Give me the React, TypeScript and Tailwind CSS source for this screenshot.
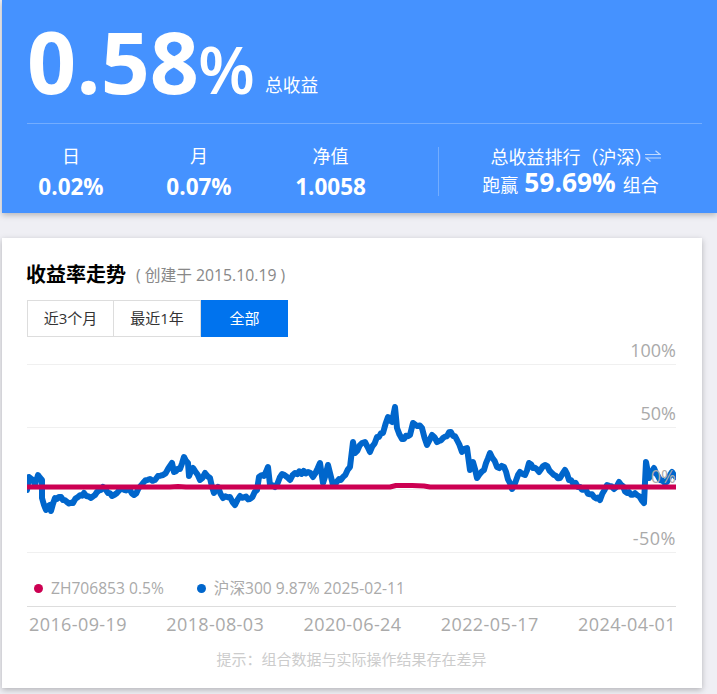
import React from 'react';

const SANS = "font-['Open_Sans','Noto_Sans_CJK_SC',sans-serif]";

const bluePoints = [
  [27, 490], [29, 477], [33, 480], [35, 485], [38, 475], [42, 480], [42, 498], [46, 510], [50, 505], [51, 511], [55, 498], [61, 497], [67, 502], [73, 503], [78, 497], [84, 493], [91, 498], [97, 492], [103, 487], [108, 493], [112, 496], [117, 493], [122, 489], [130, 490], [134, 495], [143, 483], [150, 479], [155, 480], [158, 476], [163, 475], [168, 469], [172, 463], [174, 472], [180, 469], [184, 457], [188, 463], [189, 476], [193, 468], [200, 480], [205, 473], [210, 478], [214, 493], [218, 487], [223, 498], [230, 497], [235, 505], [240, 496], [250, 499], [257, 490], [259, 477], [264, 476], [268, 467], [270, 485], [275, 487], [282, 474], [287, 477], [290, 480], [295, 473], [308, 472], [313, 477], [320, 463], [323, 483], [328, 465], [333, 485], [343, 477], [350, 467], [353, 442], [355, 453], [362, 443], [365, 442], [370, 452], [377, 437], [383, 433], [388, 417], [392, 422], [395, 407], [397, 428], [402, 439], [410, 435], [413, 423], [422, 428], [427, 445], [432, 435], [437, 442], [443, 438], [451, 432], [457, 440], [462, 452], [467, 448], [470, 470], [473, 462], [477, 478], [484, 470], [490, 453], [497, 467], [504, 467], [512, 489], [520, 472], [525, 475], [529, 463], [539, 472], [545, 465], [554, 475], [560, 478], [565, 470], [569, 480], [580, 487], [594, 497], [600, 500], [607, 485], [614, 489], [619, 482], [627, 493], [637, 495], [644, 503], [646, 462], [649, 478], [654, 468], [660, 480], [667, 482], [672, 472], [676, 477],
];

// fill in daily wobble between the hand read points
function wobble(points: number[][]) {
  const out: string[] = [];
  points.forEach(([x, y], i) => {
    out.push(`${x},${y}`);
    const next = points[i + 1];
    if (!next) return;
    const steps = Math.floor((next[0] - x) / 2);
    for (let s = 1; s < steps; s++) {
      const t = s / steps;
      const px = x + (next[0] - x) * t;
      const py = y + (next[1] - y) * t + Math.sin(px * 7.3) * 1.4;
      out.push(`${px.toFixed(1)},${py.toFixed(1)}`);
    }
  });
  return out.join(' ');
}

const blueLine = wobble(bluePoints);

const redLine = '27,487 170,487 178,486.5 186,487 390,487 396,485.5 412,485.5 424,486 430,487 676,487';

const stats = [
  { label: '日', value: '0.02%', width: 'w-[128px]' },
  { label: '月', value: '0.07%', width: 'w-[128px]' },
  { label: '净值', value: '1.0058', width: 'w-[135px]' },
];

const yLabels = [
  { text: '100%', top: 'top-[-2px]' },
  { text: '50%', top: 'top-[61px]' },
  { text: '-50%', top: 'top-[186px] tracking-[0.5px]' },
];

const dates = ['2016-09-19', '2018-08-03', '2020-06-24', '2022-05-17', '2024-04-01'];

function SwapIcon() {
  return (
    <svg width="16" height="12" viewBox="0 0 16 12" fill="none" stroke="white" strokeOpacity="0.65" strokeWidth="1.2" className="absolute left-[156px] top-[3px]">
      <path d="M0 4.5H15L10.5 0.8" />
      <path d="M16 8H1L5.5 11.5" />
    </svg>
  );
}

export default function App() {
  return (
    <div className={`h-[694px] w-[717px] overflow-hidden bg-[#efeff4] pl-[2px] ${SANS}`}>
      <header className="h-[213px] bg-[#4592ff] pl-[25px] text-white shadow-[0_2px_6px_rgba(0,0,0,0.25)]">
        <div className="flex h-[124px] w-[675px] items-start border-b border-white/25">
          <span className="mt-[2px] text-[86px] font-bold leading-[117px]">0.58</span>
          <span className="-ml-[1px] mt-[23px] text-[66px] font-semibold leading-[90px]">%</span>
          <span className="ml-[10px] mt-[72px] text-[17.7px] leading-[26px]">总收益</span>
        </div>
        <div className="-ml-[20px] flex pt-[22px]">
          {stats.map((s) => (
            <div key={s.label} className={`${s.width} text-center`}>
              <div className="text-[18px] leading-[20px]">{s.label}</div>
              <div className="mt-[7px] text-[22.5px] font-bold leading-[28px]">{s.value}</div>
            </div>
          ))}
          <div className="ml-[40px] mt-[1px] flex h-[49px] w-[264px] flex-col items-center border-l border-white/25">
            <div className="relative ml-[6px] w-[170px] whitespace-nowrap pl-[2px] text-[18px] leading-[20px]">
              总收益排行（沪深）
              <SwapIcon />
            </div>
            <div className="mt-[1px] flex items-baseline whitespace-nowrap text-[18px] leading-[28px]">
              跑赢
              <span className="ml-[6px] mr-[7px] text-[26.3px] font-bold">59.69%</span>
              组合
            </div>
          </div>
        </div>
      </header>

      <main className="mt-[25px] h-[450px] w-[700px] bg-white pl-[25px] pt-[25px] shadow-[0_2px_6px_rgba(0,0,0,0.25)]">
        <div className="flex h-[24px] items-center">
          <h2 className="-ml-[1px] text-[20px] font-bold leading-[24px] text-black">收益率走势</h2>
          <span className="ml-[10px] mt-[1px] text-[15.75px] text-[#888]">( 创建于 2015.10.19 )</span>
        </div>
        <div className="mt-[13px] flex h-[37px] w-[261px] text-[15px]">
          <button className="w-[87px] border border-[#ddd] text-[#333]">近3个月</button>
          <button className="w-[87px] border border-l-0 border-[#ddd] text-[#333]">最近1年</button>
          <button className="w-[87px] bg-[#0073ee] text-white">全部</button>
        </div>

        <div className="relative mt-[3px] h-[266px] w-[649px]">
          <svg viewBox="27 340 649 270" width="649" height="270" className="absolute left-0 top-0">
            {[364.5, 427.5, 489.5, 552.5].map((y) => (
              <line key={y} x1="27" x2="676" y1={y} y2={y} stroke="#f0f0f0" />
            ))}
            <polyline points={blueLine} fill="none" stroke="#0066cc" strokeWidth="6" strokeLinejoin="round" strokeLinecap="round" />
            <polyline points={redLine} fill="none" stroke="#cc0052" strokeWidth="5" strokeLinejoin="round" />
          </svg>
          {yLabels.map((l) => (
            <span key={l.text} className={`absolute right-0 ${l.top} text-[18px] leading-[24px] text-[#aaa]`}>
              {l.text}
            </span>
          ))}
          <span className="absolute right-0 top-[124px] text-[18px] leading-[24px] text-[#aaa]">0%</span>

          <div className="absolute left-0 top-[238px] flex items-center text-[15.6px] leading-[20px] text-[#aaa]">
            <span className="ml-[7px] h-[9px] w-[9px] rounded-full bg-[#cc0052]" />
            <span className="ml-[8px]">ZH706853 0.5%</span>
            <span className="ml-[33px] h-[9px] w-[9px] rounded-full bg-[#0066cc]" />
            <span className="ml-[8px]">沪深300 9.87% 2025-02-11</span>
          </div>
        </div>

        <div className="flex w-[649px] justify-between border-t border-[#ddd] pl-[2px] text-[18px] leading-[34px] tracking-[0.4px] text-[#aaa]">
          {dates.map((d) => (
            <span key={d}>{d}</span>
          ))}
        </div>
        <p className="mt-[8px] w-[649px] text-center text-[15px] leading-[20px] text-[#ccc]">提示：组合数据与实际操作结果存在差异</p>
      </main>
    </div>
  );
}
